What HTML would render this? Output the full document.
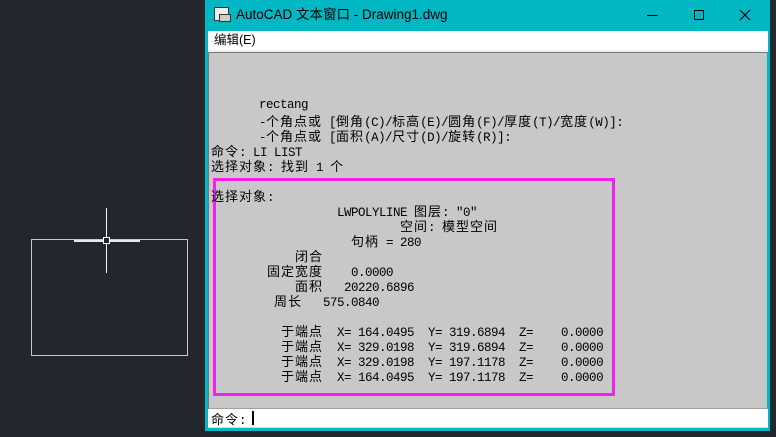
<!DOCTYPE html>
<html><head><meta charset="utf-8"><style>
*{margin:0;padding:0;box-sizing:border-box}
body{width:776px;height:437px;background:#22272e;position:relative;overflow:hidden;font-family:"Liberation Mono","Noto Sans CJK SC",monospace;}
.a{position:absolute}
.t{position:absolute;font-size:12.5px;letter-spacing:-0.5px;line-height:15px;white-space:pre;color:#000;font-family:"Liberation Mono","Noto Sans CJK SC",monospace}
.t b{font-weight:normal;font-size:13px;letter-spacing:1px;line-height:15px;font-family:"Noto Sans CJK SC",sans-serif}
</style></head><body>
<!-- drawing -->
<div class="a" style="left:31px;top:239px;width:157px;height:117px;border:1px solid #c8c8c8"></div>
<div class="a" style="left:74px;top:240px;width:66px;height:2px;background:#e8e8e8"></div>
<div class="a" style="left:106px;top:208px;width:1px;height:65px;background:#f0f0f0"></div>
<div class="a" style="left:103px;top:237px;width:7px;height:7px;border:1px solid #fff;background:#22272e"></div>
<!-- window -->
<div class="a" style="left:205px;top:0;width:565px;height:431px;background:#00b7c3"></div>
<div class="a" style="left:214px;top:7px;width:15px;height:14px;border:1px solid #333;background:#eee;border-radius:1px"></div>
<div class="a" style="left:219px;top:14px;width:12px;height:8px;border:1px solid #333;background:#ccc"></div>
<div class="a" style="left:236px;top:6px;font-family:'Liberation Sans','Noto Sans CJK SC',sans-serif;font-size:13.5px;line-height:18px;color:#000">AutoCAD 文本窗口 - Drawing1.dwg</div>
<div class="a" style="left:647px;top:15px;width:11px;height:1px;background:#000"></div>
<div class="a" style="left:694px;top:10px;width:10px;height:10px;border:1px solid #000"></div>
<svg class="a" style="left:739px;top:9px" width="12" height="12"><path d="M1 1L11 11M11 1L1 11" stroke="#000" stroke-width="1.1"/></svg>
<div class="a" style="left:208px;top:31px;width:560px;height:19px;background:#fff"></div>
<div class="a" style="left:214px;top:32px;font-family:'Liberation Sans','Noto Sans CJK SC',sans-serif;font-size:12.5px;line-height:17px">编辑(E)</div>
<div class="a" style="left:208px;top:50px;width:560px;height:2px;background:#f0f0f0"></div>
<div class="a" style="left:208px;top:52px;width:559px;height:357px;background:#c8c8c8;border-top:1px solid #777;border-left:1px solid #777;border-bottom:1px solid #a0a0a0"></div>
<div class="a" style="left:208px;top:409px;width:560px;height:19px;background:#fff;border-bottom:1px solid #ddd"></div>
<div class="a" style="left:213px;top:178px;width:402px;height:218px;border:3px solid #f020f0"></div>
<div class="t" style="left:259px;top:98px">rectang</div>
<div class="t" style="left:259px;top:113px">-<b>个角点或</b> [<b>倒角</b>(C)/<b>标高</b>(E)/<b>圆角</b>(F)/<b>厚度</b>(T)/<b>宽度</b>(W)]:</div>
<div class="t" style="left:259px;top:128px">-<b>个角点或</b> [<b>面积</b>(A)/<b>尺寸</b>(D)/<b>旋转</b>(R)]:</div>
<div class="t" style="left:211px;top:143px"><b>命令</b>: LI LIST</div>
<div class="t" style="left:211px;top:158px"><b>选择对象</b>: <b>找到</b> 1 <b>个</b></div>
<div class="t" style="left:211px;top:188px"><b>选择对象</b>:</div>
<div class="t" style="left:337px;top:203px">LWPOLYLINE <b>图层</b>: "0"</div>
<div class="t" style="left:400px;top:218px"><b>空间</b>: <b>模型空间</b></div>
<div class="t" style="left:351px;top:233px"><b>句柄</b> = 280</div>
<div class="t" style="left:295px;top:248px"><b>闭合</b></div>
<div class="t" style="left:267px;top:263px"><b>固定宽度</b>    0.0000</div>
<div class="t" style="left:295px;top:278px"><b>面积</b>   20220.6896</div>
<div class="t" style="left:274px;top:293px"><b>周长</b>   575.0840</div>
<div class="t" style="left:281px;top:323px"><b>于端点</b>  X= 164.0495  Y= 319.6894  Z=    0.0000</div>
<div class="t" style="left:281px;top:338px"><b>于端点</b>  X= 329.0198  Y= 319.6894  Z=    0.0000</div>
<div class="t" style="left:281px;top:353px"><b>于端点</b>  X= 329.0198  Y= 197.1178  Z=    0.0000</div>
<div class="t" style="left:281px;top:368px"><b>于端点</b>  X= 164.0495  Y= 197.1178  Z=    0.0000</div>
<div class="t" style="left:211px;top:411px"><b>命令</b>:</div>
<div class="a" style="left:252px;top:411px;width:2px;height:14px;background:#000"></div>
</body></html>
